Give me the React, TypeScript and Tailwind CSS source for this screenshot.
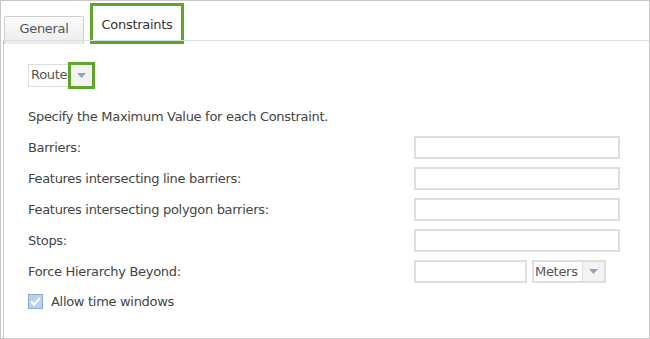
const font = { fontFamily: '"DejaVu Sans", Verdana, sans-serif' };

const rows = [
  "Barriers:",
  "Features intersecting line barriers:",
  "Features intersecting polygon barriers:",
  "Stops:",
];

function Arrow() {
  return (
    <svg width="9" height="5" viewBox="0 0 9 5">
      <path d="M0 0h9L4.5 5z" fill="#8fa3c0" />
    </svg>
  );
}

function TextBox({ w }: { w: string }) {
  return <div className={`${w} h-[23px] border-2 border-[#dedede] bg-white`} />;
}

export default function App() {
  return (
    <div
      className="flex h-[339px] w-[650px] flex-col border border-[#c8c8c8] bg-white text-[13px] tracking-[-0.3px] text-[#444]"
      style={font}
    >
      {/* tabs */}
      <div className="flex items-end gap-[6px] pl-[3px] pt-[2px]">
        <div className="flex h-[28px] w-[80px] items-center justify-center rounded-t-[2px] border border-b-0 border-[#cfcfcf] bg-gradient-to-b from-[#fbfbfb] to-[#ececec] pb-[3px] text-[#555]">
          General
        </div>
        <div className="flex h-[41px] w-[94px] items-center justify-center border-[3px] border-[#5ea52a] bg-white pt-[3px] text-[#333]">
          Constraints
        </div>
      </div>

      {/* panel */}
      <div className="ml-[2px] -mt-[4px] flex flex-1 flex-col border-l border-t border-[#c8c8c8] border-t-[#d8dfe8] pl-[24px] pr-[29px]">
        <div className="mt-[20px] flex h-[28px] items-center">
          <div className="flex h-[23px] items-center border border-[#dcdcdc] bg-white pl-[2px] pr-[1px] text-[#555]">
            Route
          </div>
          <div className="-ml-[1px] flex h-[27px] w-[27px] items-center justify-center border-[3px] border-[#5ea52a] bg-[#f3f3f3]">
            <Arrow />
          </div>
        </div>

        <div className="mt-[20px] leading-[16px]">Specify the Maximum Value for each Constraint.</div>

        <div className="mt-[7px] flex flex-col">
          {rows.map((r) => (
            <div key={r} className="flex h-[31px] items-center justify-between">
              <span>{r}</span>
              <TextBox w="w-[206px]" />
            </div>
          ))}
          <div className="flex h-[31px] items-center justify-between">
            <span>Force Hierarchy Beyond:</span>
            <div className="flex w-[206px] items-center">
              <TextBox w="w-[113px]" />
              <div className="ml-[5px] flex h-[23px] items-center border-2 border-[#dedede] bg-white">
                <span className="pl-[1px] pr-[4px] text-[#555]">Meters</span>
                <div className="flex h-full w-[22px] items-center justify-center border-l border-[#dedede] bg-[#f3f3f3]">
                  <Arrow />
                </div>
              </div>
            </div>
          </div>
        </div>

        <label className="mt-[5px] flex items-center gap-[8px]">
          <span className="flex h-[15px] w-[15px] items-center justify-center border border-[#8eaacb] bg-[#b9d1ec]">
            <svg width="11" height="9" viewBox="0 0 11 9">
              <path d="M1 4.5l3 3L10 1" stroke="#fff" strokeWidth="2" fill="none" />
            </svg>
          </span>
          <span>Allow time windows</span>
        </label>
      </div>
    </div>
  );
}
